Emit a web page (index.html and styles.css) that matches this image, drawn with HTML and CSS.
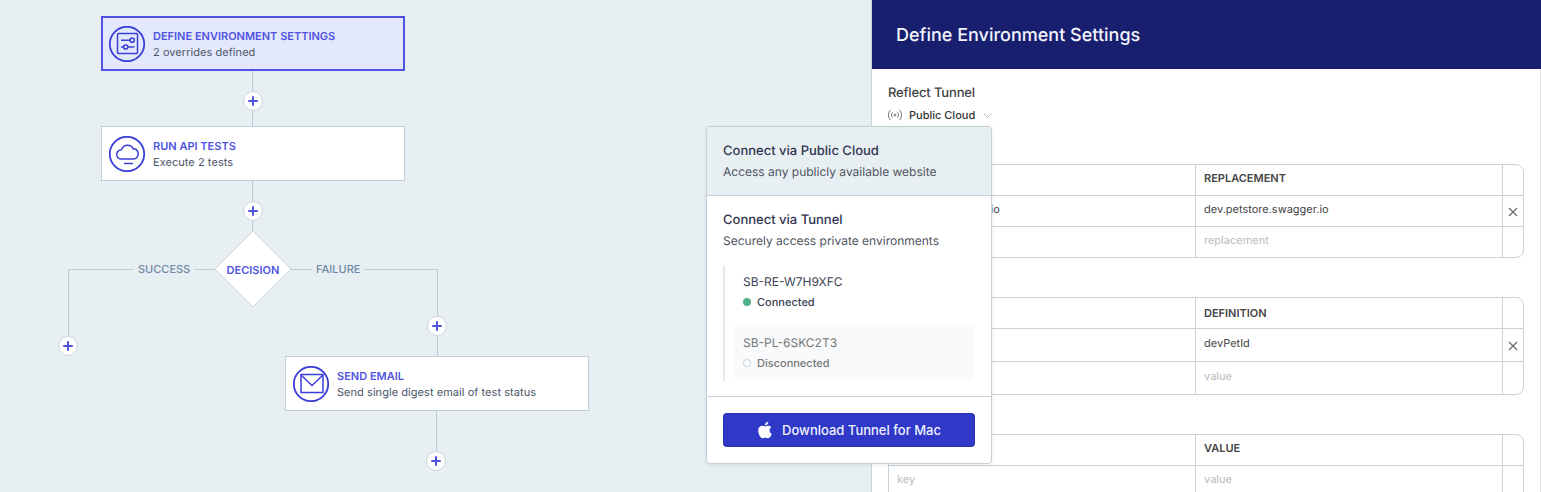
FILE: index.html
```html
<!DOCTYPE html>
<html lang="en">
<head>
<meta charset="utf-8">
<title>Define Environment Settings</title>
<link rel="stylesheet" href="styles.css">
</head>
<body>
<div class="app">
  <section class="canvas">
    <svg class="wires" width="871" height="492" viewBox="0 0 871 492">
      <path d="M252.5 71V232M68.5 346V269.5H215M291 269.5H437.5V356M436.5 411V461"/>
    </svg>

    <div class="node node-active node-a">
      <svg class="node-icon" width="36" height="36" viewBox="0 0 36 36">
        <circle cx="18" cy="18" r="17.2"/>
        <rect x="8.5" y="7.5" width="20" height="20" rx="1"/>
        <path d="M12 14.2h9M12 21h2.5M19 21h6.5"/>
        <circle cx="23.2" cy="14.2" r="2.1"/>
        <circle cx="16.7" cy="21" r="2.1"/>
      </svg>
      <div class="node-text">
        <div class="node-title">DEFINE ENVIRONMENT SETTINGS</div>
        <div class="node-sub">2 overrides defined</div>
      </div>
    </div>

    <div class="node node-b">
      <svg class="node-icon" width="36" height="36" viewBox="0 0 36 36">
        <circle cx="18" cy="18" r="17.2"/>
        <path d="M12 23C9 23 7.7 20.6 7.7 18.6 7.7 15.7 10 13.8 12.4 13.8 13.4 11 15.8 9.2 18.6 9.2 21.6 9.2 23.4 11 24.3 12.9 27 12.6 29.2 14.8 29.2 17.8 29.2 20.6 27.2 23 24.6 23Z"/>
        <path d="M15 27.5h9"/>
      </svg>
      <div class="node-text">
        <div class="node-title">RUN API TESTS</div>
        <div class="node-sub">Execute 2 tests</div>
      </div>
    </div>

    <div class="node node-c">
      <svg class="node-icon" width="36" height="36" viewBox="0 0 36 36">
        <circle cx="18" cy="18" r="17.2"/>
        <rect x="8" y="8.5" width="22" height="18"/>
        <path d="M8 9l11 10.5L30 9"/>
      </svg>
      <div class="node-text">
        <div class="node-title">SEND EMAIL</div>
        <div class="node-sub">Send single digest email of test status</div>
      </div>
    </div>

    <div class="decision">
      <svg width="78" height="78" viewBox="0 0 78 78"><path d="M39 1L77 39 39 77 1 39Z"/></svg>
      <span>DECISION</span>
    </div>
    <span class="edge-label label-success">SUCCESS</span>
    <span class="edge-label label-failure">FAILURE</span>

    <button class="add add-1"></button>
    <button class="add add-2"></button>
    <button class="add add-3"></button>
    <button class="add add-4"></button>
    <button class="add add-5"></button>

    <div class="popover">
      <div class="pop-option pop-selected">
        <div class="pop-title">Connect via Public Cloud</div>
        <div class="pop-sub">Access any publicly available website</div>
      </div>
      <div class="pop-option pop-tunnel">
        <div class="pop-title">Connect via Tunnel</div>
        <div class="pop-sub">Securely access private environments</div>
        <div class="tunnels">
          <div class="tunnel">
            <div class="tunnel-name">SB-RE-W7H9XFC</div>
            <div class="tunnel-status"><i class="dot dot-on"></i>Connected</div>
          </div>
          <div class="tunnel tunnel-off">
            <div class="tunnel-name">SB-PL-6SKC2T3</div>
            <div class="tunnel-status"><i class="dot dot-off"></i>Disconnected</div>
          </div>
        </div>
      </div>
      <div class="pop-foot">
        <button class="download">
          <svg width="20" height="20" viewBox="0 0 24 24"><path d="M18.71 19.5c-.83 1.24-1.71 2.45-3.05 2.47-1.34.03-1.77-.79-3.29-.79-1.53 0-2 .77-3.27.82-1.31.05-2.3-1.32-3.14-2.53C4.25 17 2.94 12.45 4.7 9.39c.87-1.52 2.43-2.48 4.12-2.51 1.28-.02 2.5.87 3.29.87.78 0 2.26-1.07 3.81-.91.65.03 2.47.26 3.64 1.98-.09.06-2.17 1.28-2.15 3.81.03 3.02 2.65 4.03 2.68 4.04-.03.07-.42 1.44-1.38 2.83M13 3.5c.73-.83 1.94-1.46 2.94-1.5.13 1.17-.34 2.35-1.04 3.19-.69.85-1.83 1.51-2.95 1.42-.15-1.15.41-2.35 1.05-3.11z"/></svg>
          Download Tunnel for Mac
        </button>
      </div>
    </div>
  </section>

  <aside class="panel">
    <header class="panel-head">Define Environment Settings</header>
    <div class="panel-body">
      <div class="field-label">Reflect Tunnel</div>
      <div class="select">
        <svg class="radio-icon" width="14" height="14" viewBox="0 0 14 14">
          <circle cx="7" cy="7" r="1"/>
          <path d="M4.7 4.3a3.6 3.6 0 0 0 0 5.4M9.3 4.3a3.6 3.6 0 0 1 0 5.4M2.7 1.8a6.8 6.8 0 0 0 0 10.4M11.3 1.8a6.8 6.8 0 0 1 0 10.4"/>
        </svg>
        <span>Public Cloud</span>
        <svg class="chevron" width="9" height="5" viewBox="0 0 9 5"><path d="M.5.5L4.5 4.5 8.5.5"/></svg>
      </div>

      <div class="table table-1">
        <div class="row row-head"><div class="cell"></div><div class="cell">REPLACEMENT</div><div class="cell"></div></div>
        <div class="row"><div class="cell">petstore.swagger.io</div><div class="cell">dev.petstore.swagger.io</div><div class="cell cell-x"><svg width="10" height="10" viewBox="0 0 10 10"><path d="M1 1l8 8M9 1l-8 8"/></svg></div></div>
        <div class="row"><div class="cell"></div><div class="cell ph">replacement</div><div class="cell"></div></div>
      </div>

      <div class="table table-2">
        <div class="row row-head"><div class="cell"></div><div class="cell">DEFINITION</div><div class="cell"></div></div>
        <div class="row row-tall"><div class="cell"></div><div class="cell">devPetId</div><div class="cell cell-x"><svg width="10" height="10" viewBox="0 0 10 10"><path d="M1 1l8 8M9 1l-8 8"/></svg></div></div>
        <div class="row row-tall"><div class="cell"></div><div class="cell ph">value</div><div class="cell"></div></div>
      </div>

      <div class="table table-3">
        <div class="row row-head"><div class="cell"></div><div class="cell">VALUE</div><div class="cell"></div></div>
        <div class="row"><div class="cell ph">key</div><div class="cell ph">value</div><div class="cell"></div></div>
      </div>
    </div>
  </aside>
</div>
</body>
</html>
```
FILE: styles.css
```css
* { box-sizing: border-box; }
html, body { margin: 0; height: 100%; overflow: hidden; }
body { font-family: Inter, "Liberation Sans", sans-serif; color: #444; background: #e8eff3; text-rendering: geometricPrecision; }
.app { display: flex; width: 1541px; height: 492px; overflow: hidden; }

.canvas { position: relative; width: 871px; flex: none; background: #e8eff3; }
.wires { position: absolute; left: 0; top: 0; }
.wires path { fill: none; stroke: #bccbd9; stroke-width: 1; }

.node { position: absolute; width: 304px; height: 55px; display: flex; align-items: center; gap: 8px; padding-left: 7px; background: #fff; border: 1px solid #bfcedb; }
.node-active { background: #e3e8fd; border: 2px solid #5053e0; padding-left: 6px; }
.node-a { left: 101px; top: 16px; }
.node-b { left: 101px; top: 126px; }
.node-c { left: 285px; top: 356px; }
.node-icon { flex: none; }
.node-icon circle, .node-icon rect, .node-icon path { fill: none; stroke: #3a3fd6; stroke-width: 1.5; }
.node-icon circle:first-child { stroke-width: 1.8; }
.node-title { font-size: 11px; line-height: 16px; font-weight: 600; color: #5053e0; }
.node-sub { font-size: 11px; line-height: 16px; letter-spacing: .05px; color: #4a5568; }

.decision { position: absolute; left: 214px; top: 230px; width: 78px; height: 78px; display: flex; align-items: center; justify-content: center; }
.decision svg { position: absolute; left: 0; top: 0; }
.decision path { fill: #fff; stroke: #c8d4df; stroke-width: 1; }
.decision span { position: relative; font-size: 11px; font-weight: 600; color: #5053e0; top: 1px; }

.edge-label { position: absolute; top: 261px; padding: 0 4px; background: #e8eff3; font-size: 11px; line-height: 16px; font-weight: 500; color: #6c88a3; }
.label-success { left: 134px; }
.label-failure { left: 312px; }

.add { position: absolute; width: 20px; height: 20px; padding: 0; border: 1px solid #c9d6e2; border-radius: 50%; background: #fff; }
.add::before, .add::after { content: ""; position: absolute; background: #5053e0; border-radius: 1px; }
.add::before { left: 4px; top: 8px; width: 10px; height: 2px; }
.add::after { left: 8px; top: 4px; width: 2px; height: 10px; }
.add-1 { left: 243px; top: 91px; }
.add-2 { left: 243px; top: 201px; }
.add-3 { left: 58px; top: 336px; }
.add-4 { left: 427px; top: 316px; }
.add-5 { left: 426px; top: 451px; }

.popover { position: absolute; z-index: 5; left: 706px; top: 126px; width: 286px; height: 338px; display: flex; flex-direction: column; background: #fff; border: 1px solid #c6ced6; border-radius: 4px; box-shadow: 0 1px 4px rgba(60, 70, 90, .12); }
.pop-option { padding: 16px 16px 0; }
.pop-selected { height: 69px; background: #e8eff3; border-bottom: 1px solid #c6ced6; border-radius: 3px 3px 0 0; }
.pop-tunnel { height: 201px; border-bottom: 1px solid #c6ced6; }
.pop-title { font-size: 13px; line-height: 16px; font-weight: 500; color: #31344f; }
.pop-sub { margin-top: 5px; font-size: 12px; line-height: 16px; color: #4e5561; }
.tunnels { margin-top: 16px; height: 116px; border-left: 2px solid #e6e9ec; padding-left: 8px; }
.tunnel { height: 55px; padding: 8px 10px; }
.tunnel-off { margin-top: 5px; padding-top: 9px; background: #f9fafb; border-radius: 6px; }
.tunnel-name { font-size: 12px; line-height: 18px; color: #3c3f52; }
.tunnel-status { display: flex; align-items: center; gap: 6px; margin-top: 3px; font-size: 11px; line-height: 16px; font-weight: 500; color: #3c3f52; }
.tunnel-off .tunnel-name, .tunnel-off .tunnel-status { color: #777; }
.dot { width: 8px; height: 8px; border-radius: 50%; flex: none; }
.dot-on { background: #4fb08a; }
.dot-off { background: #fff; border: 1px solid #c6ced6; }
.pop-foot { padding: 16px; }
.download { display: flex; align-items: center; justify-content: center; gap: 7px; width: 100%; height: 34px; padding: 0 2px 0 0; background: #3038c8; border: 1px solid #2c33b4; border-bottom-width: 2px; border-radius: 4px; color: #eef0ff; font: 500 13px/16px Inter, "Liberation Sans", sans-serif; }
.download svg { fill: #fff; }

.panel { flex: 1; min-width: 0; background: #fff; border-left: 1px solid #c6d1db; }
.panel-head { height: 69px; display: flex; align-items: center; padding: 2px 0 0 24px; background: #181f6e; color: #f2f3fb; font-size: 18px; font-weight: 500; }
.panel-body { height: 423px; padding: 15px 16px 0 16px; border-right: 1px solid #e2e2e2; }
.field-label { font-size: 13px; line-height: 18px; font-weight: 500; letter-spacing: -.15px; color: #444; }
.select { display: flex; align-items: center; height: 18px; margin-top: 4px; font-size: 11px; font-weight: 500; color: #333; }
.radio-icon { margin-right: 7px; }
.radio-icon circle, .radio-icon path { fill: none; stroke: #666; stroke-width: .9; }
.chevron { margin-left: 8px; }
.chevron path { fill: none; stroke: #b5bcc4; stroke-width: 1; }

.table { border: 1px solid #c9d1d9; border-radius: 0 8px 8px 0; }
.table-1 { margin-top: 40px; }
.table-2 { margin-top: 39px; }
.table-3 { margin-top: 39px; border-radius: 0 8px 0 0; }
.row { display: grid; grid-template-columns: 307px 307px 1fr; height: 31px; border-bottom: 1px solid #c9d1d9; }
.row:last-child { border-bottom: 0; height: 30px; }
.row-tall { height: 33px; }
.row-tall:last-child { height: 32px; }
.row-tall .cell { padding-top: 6px; }
.cell { padding: 5px 0 0 8px; font-size: 11px; line-height: 16px; color: #444; border-right: 1px solid #c9d1d9; }
.cell:last-child { border-right: 0; }
.row-head .cell { padding-top: 5px; font-weight: 600; }
.table-2 .row-head .cell { padding-top: 7px; }
.ph { color: #bbb; }
.cell-x, .row-tall .cell-x { padding: 0; display: flex; align-items: center; justify-content: center; }
.cell-x svg { margin-top: 1px; }
.cell-x path { fill: none; stroke: #666; stroke-width: 1.1; }
```
